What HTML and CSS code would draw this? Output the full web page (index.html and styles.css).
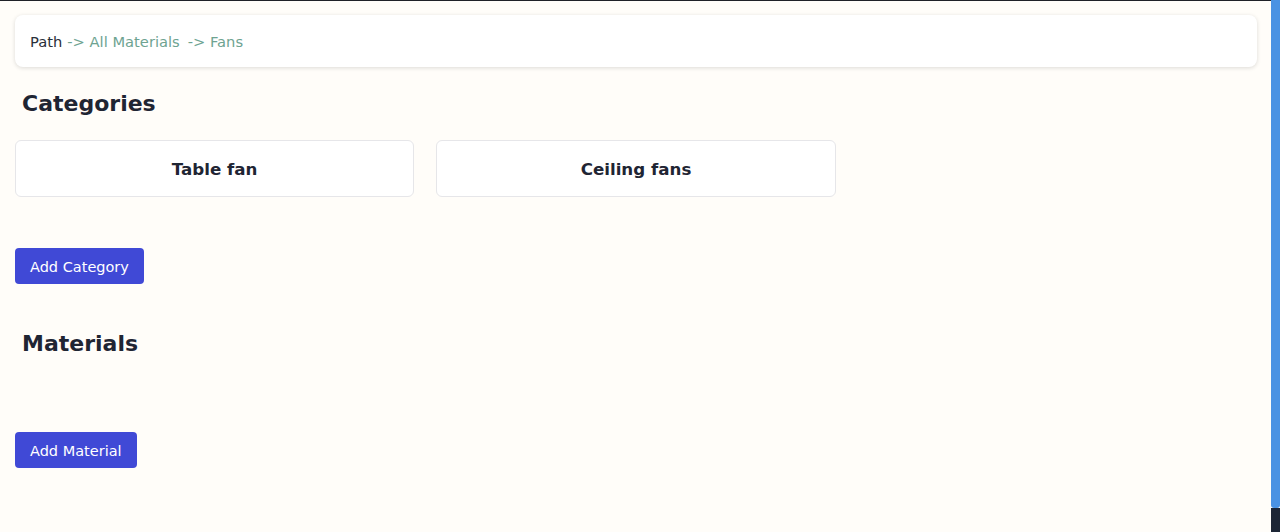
FILE: index.html
```html
<!DOCTYPE html>
<html>
<head>
<meta charset="utf-8">
<link rel="stylesheet" href="styles.css">
</head>
<body>
<div class="frame">
  <main class="page">
    <nav class="path-bar">
      <span class="path-label">Path</span>
      <span class="path-link">-&gt; All Materials</span>
      <span class="path-link path-last">-&gt; Fans</span>
    </nav>
    <section class="section">
      <h2 class="section-title">Categories</h2>
      <div class="card-grid">
        <div class="card">Table fan</div>
        <div class="card">Ceiling fans</div>
      </div>
      <button class="btn">Add Category</button>
    </section>
    <section class="section materials">
      <h2 class="section-title">Materials</h2>
      <div class="empty"></div>
      <button class="btn">Add Material</button>
    </section>
  </main>
  <aside class="side-strip">
    <div class="strip-top"></div>
    <div class="strip-bottom"></div>
  </aside>
</div>
</body>
</html>
```
FILE: styles.css
```css
* { box-sizing: border-box; }
html, body { margin: 0; padding: 0; height: 100%; }
body {
  font-family: "DejaVu Sans", Verdana, sans-serif;
  background: #fffdf9;
  color: #1f2533;
}
.frame {
  display: flex;
  height: 532px;
  overflow: hidden;
}
.page {
  flex: 1;
  border-top: 1px solid #1f2128;
  padding: 14px 14px 0 15px;
  background: #fffdf9;
}
.path-bar {
  height: 52px;
  background: #ffffff;
  border-radius: 8px;
  box-shadow: 0 1px 4px rgba(0,0,0,0.14);
  display: flex;
  align-items: center;
  padding: 1px 0 0 15px;
  font-size: 14.7px;
}
.path-label { color: #2a2f3a; }
.path-link { color: #6ea391; margin-left: 5px; }
.path-last { margin-left: 8px; }
.section-title {
  font-size: 22px;
  font-weight: bold;
  margin: 0;
  padding: 1px 7px 0;
  line-height: 30px;
  color: #1f2533;
}
.section { display: flex; flex-direction: column; align-items: flex-start; }
.section:first-of-type .section-title { margin-top: 21px; }
.card-grid {
  display: grid;
  grid-template-columns: repeat(3, 1fr);
  gap: 22px;
  width: 100%;
  margin-top: 21px;
}
.card {
  height: 57px;
  padding-top: 1px;
  background: #ffffff;
  border: 1px solid #e6e6e9;
  border-radius: 6px;
  display: flex;
  align-items: center;
  justify-content: center;
  font-size: 16.7px;
  font-weight: bold;
  color: #1f2533;
}
.btn {
  margin-top: 51px;
  height: 36px;
  padding: 1px 15px 0;
  background: #4049d6;
  color: #ffffff;
  border: none;
  border-radius: 4px;
  font-family: "DejaVu Sans", Verdana, sans-serif;
  font-size: 14.5px;
}
.materials .section-title { margin-top: 44px; }
.empty { height: 58px; }
.materials .btn { margin-top: 15px; }
.side-strip {
  width: 9px;
  display: flex;
  flex-direction: column;
}
.strip-top { height: 508px; background: #4a92e3; border-radius: 0 0 3px 3px; }
.strip-bottom { flex: 1; background: #1d2636; }
```
